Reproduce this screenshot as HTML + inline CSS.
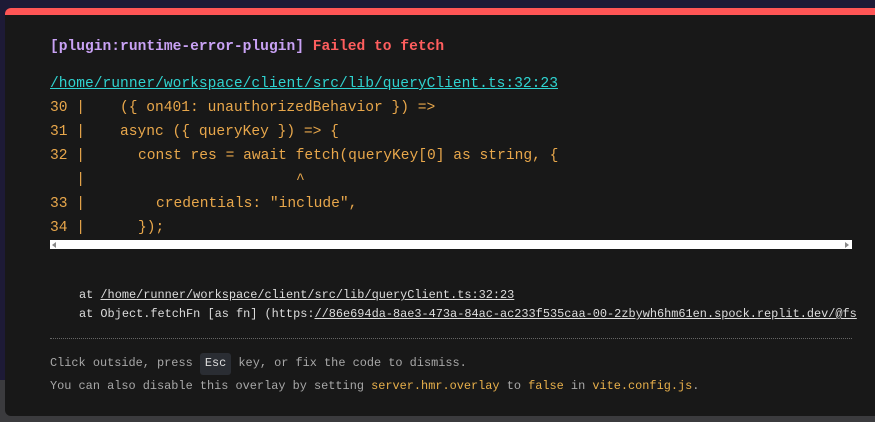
<!DOCTYPE html>
<html><head><meta charset="utf-8"><style>
html,body{margin:0;width:875px;height:422px;overflow:hidden;background:#2c2b33;font-family:"Liberation Mono",monospace}
.bgtop{position:absolute;left:0;top:0;width:875px;height:380px;background:#1d1a36}
.bgbot{position:absolute;left:0;top:380px;width:875px;height:42px;background:#3b3b3e}
.panel{position:absolute;left:5px;top:8px;width:890px;height:408px;background:#181818;border-radius:6px;overflow:hidden;border-top:7px solid #ff5555;box-sizing:border-box}
.t{position:absolute;white-space:pre;line-height:1}
.c{color:#e8a74b;font-size:14.6px}
.ln{color:#e8a74b;font-size:14.6px}
.s{color:#ddd;font-size:11.9px}
.f{color:#a8a8a8;font-size:11.9px}
.y{color:#e8b04b}
</style></head><body>
<div class="bgtop"></div><div class="bgbot"></div>
<div class="panel"></div>
<div class="t" style="left:50px;top:40px;font-size:14.6px;font-weight:bold"><span style="color:#c9a2f5">[plugin:runtime-error-plugin]</span> <span style="color:#ff5e5e">Failed to fetch</span></div>
<div class="t" style="left:50px;top:77px;font-size:14.6px;color:#2fd3d0;text-decoration:underline">/home/runner/workspace/client/src/lib/queryClient.ts:32:23</div>
<div class="t ln" style="left:50px;top:101px">30 |</div><div class="t c" style="left:120px;top:101px">({ on401: unauthorizedBehavior }) =&gt;</div>
<div class="t ln" style="left:50px;top:125px">31 |</div><div class="t c" style="left:120px;top:125px">async ({ queryKey }) =&gt; {</div>
<div class="t ln" style="left:50px;top:149px">32 |</div><div class="t c" style="left:138px;top:149px">const res = await fetch(queryKey[0] as string, {</div>
<div class="t ln" style="left:50px;top:173px">   |</div><div class="t c" style="left:296px;top:173px">^</div>
<div class="t ln" style="left:50px;top:197px">33 |</div><div class="t c" style="left:156px;top:197px">credentials: "include",</div>
<div class="t ln" style="left:50px;top:221px">34 |</div><div class="t c" style="left:138px;top:221px">});</div>
<div style="position:absolute;left:50px;top:240px;width:802px;height:9px;background:#fff"></div>
<div style="position:absolute;left:52px;top:242px;width:0;height:0;border-top:3px solid transparent;border-bottom:3px solid transparent;border-right:4px solid #888"></div>
<div style="position:absolute;left:845px;top:242px;width:0;height:0;border-top:3px solid transparent;border-bottom:3px solid transparent;border-left:4px solid #888"></div>
<div class="t s" style="left:79px;top:290px">at <u>/home/runner/workspace/client/src/lib/queryClient.ts:32:23</u></div>
<div class="t s" style="left:79px;top:309px">at Object.fetchFn [as fn] (https:<u>//86e694da-8ae3-473a-84ac-ac233f535caa-00-2zbywh6hm61en.spock.replit.dev/@fs</u></div>
<div style="position:absolute;left:50px;top:338px;width:802px;border-top:1px dotted #666"></div>
<div class="t f" style="left:50px;top:358px">Click outside, press <span style="display:inline-block;background:#2a2d33;border-radius:3px;padding:5px 5px;color:#ddd;margin:-6px 0">Esc</span> key, or fix the code to dismiss.</div>
<div class="t f" style="left:50px;top:381px">You can also disable this overlay by setting <span class="y">server.hmr.overlay</span> to <span class="y">false</span> in <span class="y">vite.config.js</span>.</div>
</body></html>
